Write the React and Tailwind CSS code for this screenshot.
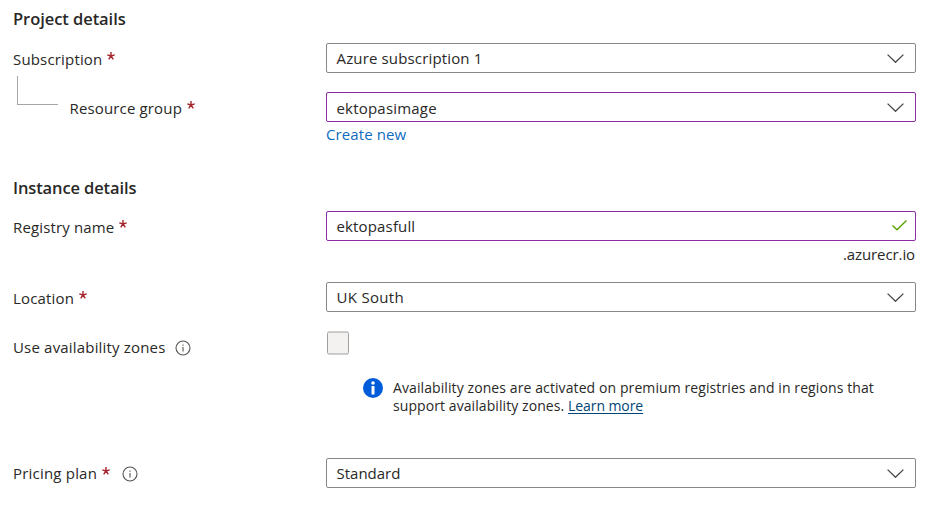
import React from "react";

function Required() {
  return (
    <svg className="ml-[5px] h-2 w-2 shrink-0 -translate-y-[3px]" viewBox="0 0 8 8" fill="none" stroke="#a4262c" strokeWidth="1.4">
      <path d="M4 0V4M0.3 2.9L4 4M7.7 2.9L4 4M1.7 7.4L4 4M6.3 7.4L4 4" />
    </svg>
  );
}

function InfoOutline() {
  return (
    <svg className="h-4 w-4 shrink-0" viewBox="0 0 16 16" fill="none" stroke="#55534f">
      <circle cx="8" cy="8" r="7" strokeWidth="1.1" />
      <path d="M8 7V11.5M8 4.6V5.8" strokeWidth="1.1" />
    </svg>
  );
}

function Chevron() {
  return (
    <svg className="h-[9px] w-[17px] shrink-0" viewBox="0 0 17 9" fill="none" stroke="#484644" strokeWidth="1.3">
      <path d="M0.6 0.6L8.5 8.3L16.4 0.6" />
    </svg>
  );
}

function Check() {
  return (
    <svg className="h-[11px] w-[15px] shrink-0 -translate-y-px" viewBox="0 0 15 11" fill="none" stroke="#57a300" strokeWidth="1.4">
      <path d="M0.5 5.4L5 9.8L14.5 0.6" />
    </svg>
  );
}

function Field({ active, icon, children }) {
  return (
    <div
      className={`flex h-[30px] w-[590px] shrink-0 items-center justify-between rounded-[2px] border bg-white pl-[9.5px] ${
        active ? "border-[#8a2da5]" : "border-[#8a8886]"
      } ${icon === "check" ? "pr-2" : "pr-[11px]"}`}
    >
      {children}
      {icon === "check" ? <Check /> : <Chevron />}
    </div>
  );
}

function Row({ label, className, children }) {
  return (
    <div className={`flex h-[30px] items-center ${className}`}>
      <div className="flex w-[313px] shrink-0 items-center pt-px">{label}</div>
      {children}
    </div>
  );
}

export default function App() {
  return (
    <main className="h-[509px] w-[941px] overflow-hidden bg-white pl-[13px] font-['Open_Sans','Noto_Sans',sans-serif] text-[15px] leading-5 whitespace-nowrap text-[#292827]">
      <section>
        <h2 className="pt-[9px] text-[16.5px] leading-5 font-semibold"><span className="tracking-[-0.06px]">Project details</span></h2>
        <Row className="mt-[14px]" label={<><span className="tracking-[0.17px]">Subscription</span><Required /></>}>
          <Field><span className="tracking-[0.15px]">Azure subscription 1</span></Field>
        </Row>
        <Row
          className="mt-[19px]"
          label={
            <>
              <span className="mr-[11.5px] ml-1 h-[29px] w-[41px] -translate-y-[17px] border-b border-l border-[#a6a6a6]" />
              <span className="tracking-[0.15px]">Resource group</span>
              <Required />
            </>
          }
        >
          <Field active><span className="translate-y-px tracking-[0.2px]">ektopasimage</span></Field>
        </Row>
        <div className="mt-[2px] ml-[313px] h-5 text-[#0f6cbd]"><span className="tracking-[0.1px]">Create new</span></div>
      </section>
      <section>
        <h2 className="mt-[34px] text-[16.5px] leading-5 font-semibold"><span className="tracking-[-0.12px]">Instance details</span></h2>
        <Row className="mt-[13px]" label={<><span className="tracking-[0.15px]">Registry name</span><Required /></>}>
          <Field active icon="check"><span className="tracking-[0.15px]">ektopasfull</span></Field>
        </Row>
        <div className="mt-[3px] flex h-5 w-[902px] justify-end"><span className="tracking-[-0.1px]">.azurecr.io</span></div>
        <Row className="mt-[18px]" label={<><span className="tracking-[0.18px]">Location</span><Required /></>}>
          <Field><span className="tracking-[0.3px]">UK South</span></Field>
        </Row>
        <Row className="mt-5" label={<><span className="mr-[9.5px] -translate-y-px tracking-[0.18px]">Use availability zones</span><InfoOutline /></>}>
          <div className="ml-px h-[23px] w-[22px] -translate-y-[4.5px] rounded-[2px] border border-[#a19f9d] bg-[#f3f2f1]" />
        </Row>
        <div className="mt-[17px] ml-[350px] flex h-9 gap-[10px] text-[14px] leading-[18px]">
          <svg className="-mt-px h-5 w-5 shrink-0" viewBox="0 0 20 20">
            <circle cx="10" cy="10" r="10" fill="#015cda" />
            <circle cx="10" cy="5" r="1.8" fill="#fff" />
            <rect x="8.5" y="8" width="3" height="8.5" rx="0.6" fill="#fff" />
          </svg>
          <p>
            <span className="tracking-[0.095px]">Availability zones are activated on premium registries and in regions that</span>
            <br />
            <span className="tracking-[0.08px]">support availability zones. </span>
            <a className="tracking-[-0.08px] text-[#004578] underline underline-offset-2">Learn more</a>
          </p>
        </div>
        <Row className="mt-[43px]" label={<><span className="-translate-y-px tracking-[0.2px]">Pricing plan</span><Required /><span className="w-[11.5px]" /><InfoOutline /></>}>
          <Field><span>Standard</span></Field>
        </Row>
      </section>
    </main>
  );
}
